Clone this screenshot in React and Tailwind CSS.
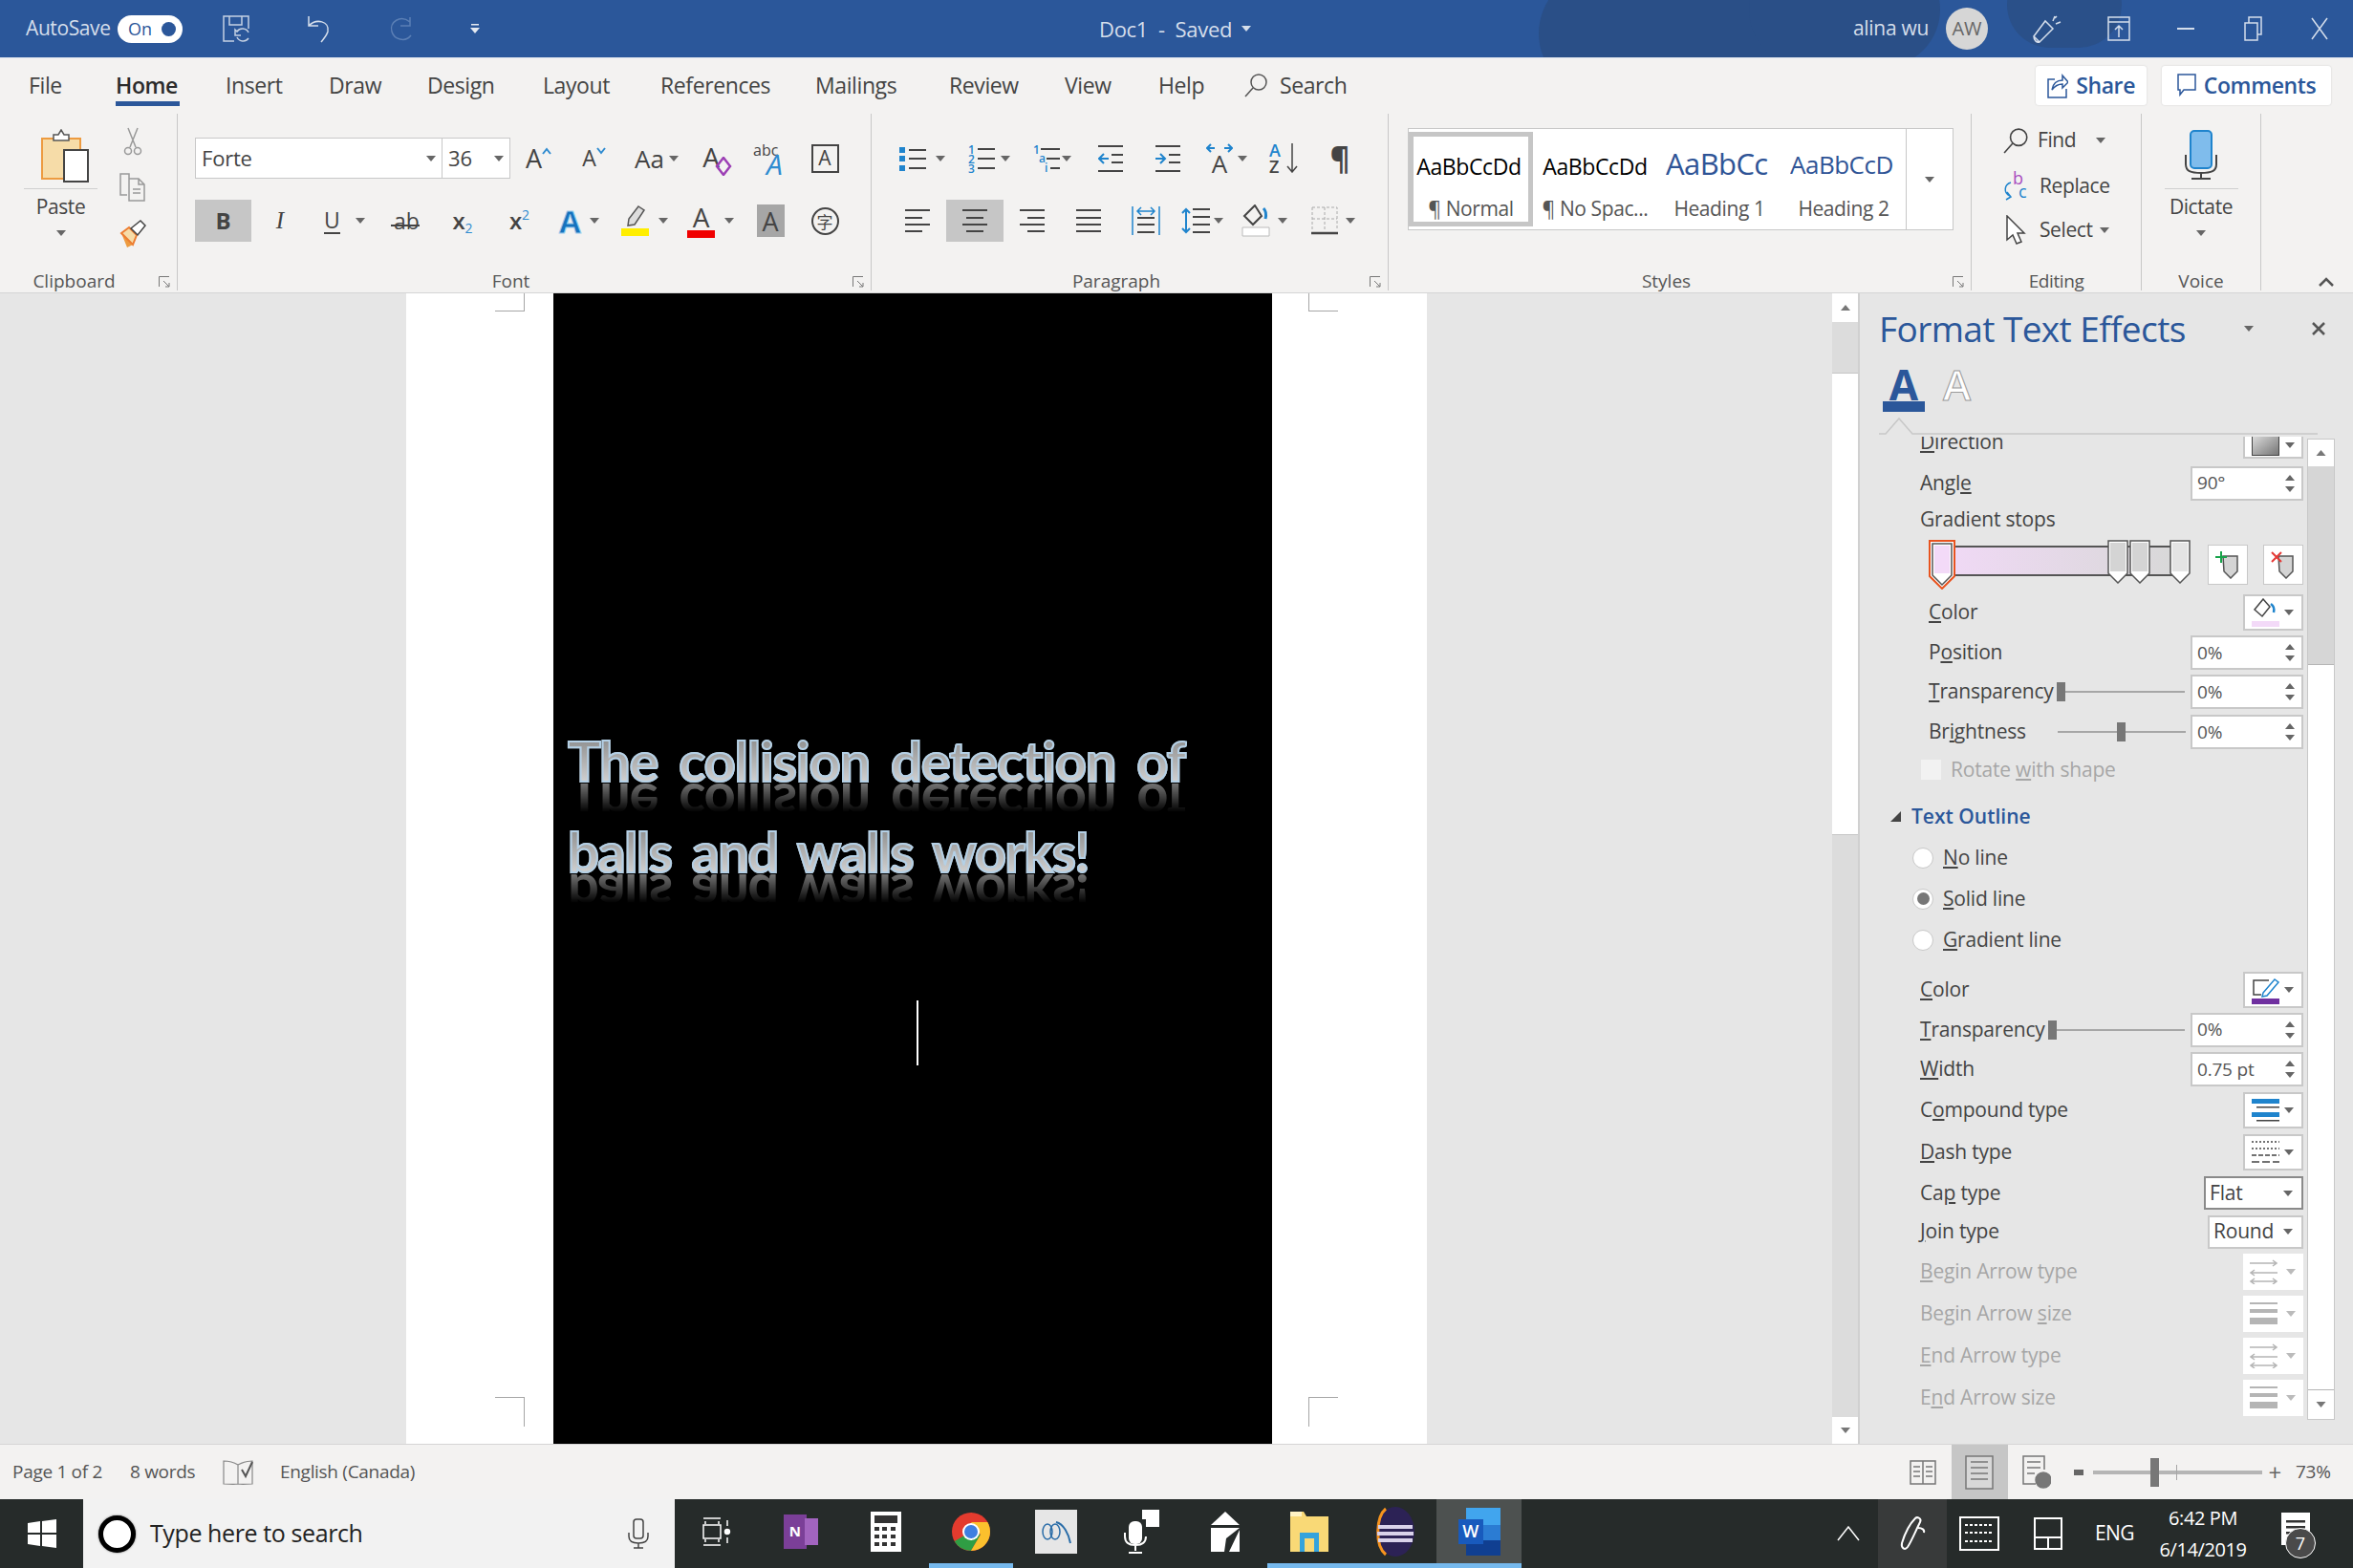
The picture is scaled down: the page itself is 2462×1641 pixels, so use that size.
import clsx from "clsx";

function Caret({ className, color = "#666" }) {
  return (
    <svg width="10" height="6" viewBox="0 0 10 6" className={clsx("shrink-0", className)}>
      <path d="M0 0h10L5 6z" fill={color} />
    </svg>
  );
}

function Bars({ lines, color = "#444", w = 32, h = 30 }) {
  return (
    <svg width={w} height={h} viewBox={`0 0 ${w} ${h}`}>
      {lines.map(([x1, x2, y], i) => (
        <path key={i} d={`M${x1} ${y}H${x2}`} stroke={color} strokeWidth="2" />
      ))}
    </svg>
  );
}

function GroupFooter({ label, launcher, className }) {
  return (
    <div className={clsx("relative mt-auto flex h-[20px] items-center justify-center text-[19px] leading-none text-[#555]", launcher ? "pr-[28px]" : "", className)}>
      {label}
      {launcher ? (
        <svg width="12" height="12" viewBox="0 0 12 12" className="absolute right-[7px] top-[5px]">
          <path d="M.5 11V.5H11M5 5l6 6M7 11h4V7" fill="none" stroke="#777" />
        </svg>
      ) : null}
    </div>
  );
}

function Cell({ className, children }) {
  return <div className={clsx("flex shrink-0 items-center justify-center", className)}>{children}</div>;
}

function LetterA({ size = 28, className, children }) {
  return <span className={clsx("relative leading-none", className)} style={{ fontSize: size }}>{children}</span>;
}

function TitleBar() {
  return (
    <div className="relative flex h-[61px] items-center overflow-hidden border-b border-[#dfe5ee] bg-[#2b579a] text-[#d5deeb]">
      <div className="absolute left-[1610px] top-[-30px] h-[130px] w-[330px] rounded-full bg-[#2a4f87]" />
      <div className="absolute left-[1830px] top-[-50px] h-[120px] w-[200px] rounded-full bg-[#2a4f87]" />
      <div className="absolute left-[2100px] top-[-40px] h-[90px] w-[120px] rounded-full bg-[#2a5089]" />
      <div className="relative ml-[27px] w-[96px] text-[21px] tracking-[-0.4px]">AutoSave</div>
      <div className="relative flex h-[29px] w-[68px] items-center justify-between rounded-full bg-white pl-[11px] pr-[7px] text-[18px] text-[#2b579a]">
        On
        <span className="h-[15px] w-[15px] rounded-full bg-[#2b579a]" />
      </div>
      <svg width="32" height="30" viewBox="0 0 32 30" className="relative ml-[40px]" fill="none" stroke="#c5d1e3" strokeWidth="1.5">
        <path d="M14 28H3V2h26v13M9 2v9h13V2M29 19a7 7 0 0 0-12-1l-2-2v6h6M17 24a7 7 0 0 0 12 1" />
      </svg>
      <svg width="30" height="30" viewBox="0 0 30 30" className="relative ml-[57px]" fill="none" stroke="#d5deeb" strokeWidth="1.5">
        <path d="M3 2v10h10M3 12c8-8 22-5 20 6-1 4-4 7-7 11" />
      </svg>
      <svg width="32" height="30" viewBox="0 0 32 30" className="relative ml-[55px]" fill="none" stroke="#5b7fb5" strokeWidth="1.5">
        <path d="M24 3v9H14M24 8C14 0 2 8 5 18c2 8 14 12 20 4" />
      </svg>
      <svg width="10" height="12" viewBox="0 0 10 12" className="relative ml-[55px]" fill="#e4e9f1">
        <path d="M1 1h8v1.5H1zM0 5h10l-5 6z" />
      </svg>
      <div className="relative ml-[648px] flex w-[180px] items-center text-[22px] tracking-[-0.3px]">
        Doc1 &nbsp;-&nbsp; Saved
        <Caret className="ml-[10px]" color="#d5deeb" />
      </div>
      <div className="relative ml-auto flex items-center">
        <div className="text-[21px] tracking-[-0.3px]">alina wu</div>
        <div className="ml-[18px] flex h-[44px] w-[44px] items-center justify-center rounded-full bg-[#d6d6d6] text-[20px] text-[#666]">AW</div>
        <svg width="32" height="32" viewBox="0 0 32 32" className="ml-[46px]" fill="none" stroke="#d5deeb" strokeWidth="1.5">
          <path d="M2 24 14 8l8 8L8 30zM8 30c-3 1-6-2-6-6M22 8l2-5M25 11l5-2M24 5l2-2" />
        </svg>
        <svg width="24" height="28" viewBox="0 0 24 28" className="ml-[47px]" fill="none" stroke="#d5deeb" strokeWidth="1.5">
          <path d="M1 2h22v24H1zM1 7h22M12 23V11M8 15l4-4 4 4" />
        </svg>
        <div className="ml-[49px] h-[2px] w-[18px] bg-[#d5deeb]" />
        <svg width="20" height="28" viewBox="0 0 20 28" className="ml-[52px]" fill="none" stroke="#d5deeb" strokeWidth="1.5">
          <path d="M1 8h13v18H1zM5 8V2h13v18h-4" />
        </svg>
        <svg width="20" height="26" viewBox="0 0 20 26" className="ml-[49px] mr-[25px]" fill="none" stroke="#d5deeb" strokeWidth="1.5">
          <path d="M2 2l16 22M18 2 2 24" />
        </svg>
      </div>
    </div>
  );
}

function TabRow() {
  return (
    <div className="flex h-[58px] items-center pb-[2px] pl-[30px] text-[23px] tracking-[-0.4px] text-[#444]">
      <div className="w-[91px]">File</div>
      <div className="relative w-[115px] font-semibold text-[#2b2b2b]">
        Home
        <span className="absolute left-0 top-[34px] h-[5px] w-[67px] bg-[#2b579a]" />
      </div>
      <div className="w-[108px]">Insert</div>
      <div className="w-[103px]">Draw</div>
      <div className="w-[121px]">Design</div>
      <div className="w-[123px]">Layout</div>
      <div className="w-[162px]">References</div>
      <div className="w-[140px]">Mailings</div>
      <div className="w-[121px]">Review</div>
      <div className="w-[98px]">View</div>
      <div className="w-[90px]">Help</div>
      <svg width="26" height="26" viewBox="0 0 26 26" fill="none" stroke="#555" strokeWidth="1.5">
        <circle cx="15" cy="10" r="8" />
        <path d="M9 16 1 25" />
      </svg>
      <div className="ml-[11px]">Search</div>
      <div className="ml-auto mr-[16px] flex h-[41px] items-center rounded-[3px] bg-white px-[12px] text-[23px] font-semibold text-[#2b579a] shadow-[0_0_2px_#ccc]">
        <svg width="22" height="28" viewBox="0 0 22 28" fill="none" stroke="#2b579a" strokeWidth="1.5" className="mr-[8px]">
          <path d="M8 8H1v19h19v-9M5 19c1-6 5-10 11-10V4l6 7-6 6v-4c-5 0-8 2-11 6z" />
        </svg>
        Share
      </div>
      <div className="mr-[23px] flex h-[41px] w-[177px] items-center justify-center rounded-[3px] bg-white text-[23px] font-semibold text-[#2b579a] shadow-[0_0_2px_#ccc]">
        <svg width="20" height="26" viewBox="0 0 20 26" fill="none" stroke="#2b579a" strokeWidth="1.5" className="mr-[8px]">
          <path d="M1 2h18v16H7l-4 5v-5H1z" />
        </svg>
        Comments
      </div>
    </div>
  );
}

function ClipboardGroup() {
  return (
    <div className="flex h-[185px] w-[186px] shrink-0 flex-col border-r border-[#c8c8c8]">
      <div className="flex">
        <div className="flex w-[127px] flex-col items-center pt-[16px]">
          <svg width="52" height="56" viewBox="0 0 52 56" fill="none" className="ml-[8px]">
            <path d="M2 10h40v42H2z" fill="#f6dca8" stroke="#ed9b40" strokeWidth="2" />
            <path d="M14 12V6h5l3-5 3 5h5v6z" fill="#fff" stroke="#555" strokeWidth="1.5" />
            <path d="M25 22h25v33H25z" fill="#fff" stroke="#444" strokeWidth="2" />
          </svg>
          <div className="mt-[6px] h-px w-[77px] bg-[#cfcfcf]" />
          <div className="mt-[5px] text-[21px] leading-[26px] tracking-[-0.4px] text-[#444]">Paste</div>
          <Caret className="mt-[12px]" />
        </div>
        <div className="flex w-[24px] flex-col items-center pt-[14px]">
          <svg width="20" height="30" viewBox="0 0 20 30" fill="none" stroke="#999" strokeWidth="1.5">
            <path d="M5 1l8 20M15 1 7 21" />
            <circle cx="5" cy="25" r="3.5" />
            <circle cx="15" cy="25" r="3.5" />
          </svg>
          <svg width="28" height="30" viewBox="0 0 28 30" fill="none" stroke="#999" strokeWidth="1.5" className="mt-[18px]">
            <path d="M10 6V1H1v22h7M10 6h10l6 6v17H10zM20 6v6h6M14 17h8M14 21h8" />
          </svg>
          <svg width="28" height="30" viewBox="0 0 28 30" className="mt-[19px]">
            <path d="M2 14l12 12-6 3z" fill="#ed9b40" />
            <path d="M2 14l8-6 8 8-4 10z" fill="#f6dca8" stroke="#ed7d31" strokeWidth="2" />
            <path d="M12 9l10-8 5 5-8 10z" fill="#fff" stroke="#444" strokeWidth="1.5" />
          </svg>
        </div>
      </div>
      <GroupFooter label="Clipboard" launcher className="!pr-[30px]" />
    </div>
  );
}

function FontGroup() {
  return (
    <div className="flex h-[185px] w-[726px] shrink-0 flex-col border-r border-[#c8c8c8]">
      <div className="flex items-center pl-[18px] pt-[25px]">
        <div className="flex h-[43px] w-[258px] items-center justify-between border-y border-l border-[#c8c8c8] bg-white pl-[6px] pr-[6px] text-[22px] tracking-[-0.2px] text-[#444]">
          Forte
          <Caret />
        </div>
        <div className="flex h-[43px] w-[72px] items-center justify-between border border-[#c8c8c8] bg-white pl-[6px] pr-[6px] text-[22px] text-[#444]">
          36
          <Caret />
        </div>
        <Cell className="w-[59px] text-[#444]">
          <LetterA size={27}>A</LetterA>
          <svg width="10" height="8" viewBox="0 0 10 8" className="-mt-[16px]" fill="none" stroke="#2e8bd0" strokeWidth="2"><path d="M1 7l4-5 4 5" /></svg>
        </Cell>
        <Cell className="w-[57px] text-[#444]">
          <LetterA size={23}>A</LetterA>
          <svg width="10" height="8" viewBox="0 0 10 8" className="-mt-[16px]" fill="none" stroke="#2e8bd0" strokeWidth="2"><path d="M1 1l4 5 4-5" /></svg>
        </Cell>
        <Cell className="w-[74px] text-[#444]">
          <LetterA size={26}>Aa</LetterA>
          <Caret className="ml-[5px]" />
        </Cell>
        <Cell className="w-[50px] text-[#444]">
          <div className="relative -ml-[10px]">
            <LetterA size={28}>A</LetterA>
            <svg width="18" height="20" viewBox="0 0 18 20" className="absolute left-[13px] top-[14px]" fill="none" stroke="#9c3fb5" strokeWidth="2.5"><path d="M9 1l7 9-7 9-7-9z" /></svg>
          </div>
        </Cell>
        <Cell className="w-[60px]">
          <div className="relative h-[34px] w-[32px] text-[#444]">
            <span className="absolute left-0 top-0 text-[16px] leading-none">abc</span>
            <span className="absolute left-[14px] top-[8px] text-[30px] italic leading-none text-[#2e8bd0]">A</span>
          </div>
        </Cell>
        <Cell className="w-[58px]">
          <div className="flex h-[30px] w-[29px] items-center justify-center border-2 border-[#444] text-[21px] leading-none text-[#444]">A</div>
        </Cell>
      </div>
      <div className="mt-[22px] flex items-center pl-[18px] text-[#444]">
        <Cell className="h-[44px] w-[59px] bg-[#c6c6c6] text-[24px] font-bold">B</Cell>
        <Cell className="h-[44px] w-[60px] text-[25px] italic [font-family:'Liberation_Serif',serif]">I</Cell>
        <Cell className="h-[44px] w-[75px]">
          <span className="ml-[-8px] border-b-2 border-[#444] text-[23px] leading-[26px]">U</span>
          <Caret className="ml-[16px] mr-[-8px]" />
        </Cell>
        <Cell className="h-[44px] w-[55px]">
          <span className="relative text-[23px] leading-none">ab<span className="absolute left-[-3px] top-[15px] h-[2px] w-[30px] bg-[#444]" /></span>
        </Cell>
        <Cell className="h-[44px] w-[62px] text-[24px] font-semibold">x<span className="mt-[14px] text-[14px] font-normal text-[#2e8bd0]">2</span></Cell>
        <Cell className="h-[44px] w-[57px] text-[24px] font-semibold">x<span className="-mt-[14px] text-[14px] font-normal text-[#2e8bd0]">2</span></Cell>
        <Cell className="h-[44px] w-[68px]">
          <span className="text-[33px] font-bold leading-none text-[#1672bd] [-webkit-text-stroke:1px_#9ccbec]">A</span>
          <Caret className="ml-[9px]" />
        </Cell>
        <Cell className="h-[44px] w-[68px]">
          <div className="flex w-[30px] flex-col items-center">
            <svg width="26" height="24" viewBox="0 0 26 24" fill="#ddd" stroke="#555" strokeWidth="1.5"><path d="M16 1l6 4-10 15-7 1 1-7z" /></svg>
            <div className="h-[8px] w-[29px] bg-[#ffee00]" />
          </div>
          <Caret className="ml-[9px]" />
        </Cell>
        <Cell className="h-[44px] w-[70px]">
          <div className="flex w-[30px] flex-col items-center">
            <span className="text-[28px] leading-[26px]">A</span>
            <div className="mt-[1px] h-[8px] w-[29px] bg-[#f00000]" />
          </div>
          <Caret className="ml-[9px]" />
        </Cell>
        <Cell className="h-[44px] w-[56px]">
          <div className="flex h-[34px] w-[29px] items-center justify-center bg-[#a6a6a6] text-[27px] leading-none">A</div>
        </Cell>
        <Cell className="h-[44px] w-[58px]">
          <div className="flex h-[29px] w-[29px] items-center justify-center rounded-full border-2 border-[#444] text-[17px] leading-none [font-family:'Noto_Sans_CJK_SC',sans-serif]">字</div>
        </Cell>
      </div>
      <GroupFooter label="Font" launcher />
    </div>
  );
}

function ListIcon({ marks, lines }) {
  return (
    <div className="relative h-[30px] w-[30px]">
      {marks.map((m, i) => (
        <span key={i} className={clsx("absolute text-[12px] font-semibold leading-none text-[#1f84cd]", m[1])}>{m[0]}</span>
      ))}
      <Bars lines={lines} />
    </div>
  );
}

function ParagraphGroup() {
  return (
    <div className="flex h-[185px] w-[541px] shrink-0 flex-col border-r border-[#c8c8c8] text-[#444]">
      <div className="flex items-center pl-[18px] pt-[32px]">
        <Cell className="h-[30px] w-[70px]">
          <svg width="30" height="28" viewBox="0 0 30 28">
            <path d="M0 2h6v6H0zM0 11h6v6H0zM0 21h6v6H0z" fill="#1f84cd" />
            <path d="M10 5h18M10 14h18M10 24h18" stroke="#444" strokeWidth="2" />
          </svg>
          <Caret className="ml-[8px]" />
        </Cell>
        <Cell className="h-[30px] w-[70px]">
          <ListIcon marks={[["1", "left-0 top-0"], ["2", "left-0 top-[10px]"], ["3", "left-0 top-[20px]"]]} lines={[[10, 28, 5], [10, 28, 15], [10, 28, 25]]} />
          <Caret className="ml-[4px]" />
        </Cell>
        <Cell className="h-[30px] w-[62px]">
          <ListIcon marks={[["1", "left-0 top-0"], ["a", "left-[6px] top-[9px]"], ["i", "left-[12px] top-[19px]"]]} lines={[[8, 28, 5], [14, 28, 15], [18, 28, 25]]} />
          <Caret />
        </Cell>
        <Cell className="h-[30px] w-[60px]">
          <svg width="26" height="30" viewBox="0 0 26 30" fill="none">
            <path d="M0 2h26M14 11h12M14 19h12M0 28h26" stroke="#444" strokeWidth="2" />
            <path d="M11 15H1M6 10l-5 5 5 5" stroke="#1f84cd" strokeWidth="2" />
          </svg>
        </Cell>
        <Cell className="h-[30px] w-[60px]">
          <svg width="26" height="30" viewBox="0 0 26 30" fill="none">
            <path d="M0 2h26M14 11h12M14 19h12M0 28h26" stroke="#444" strokeWidth="2" />
            <path d="M0 15h10M5 10l5 5-5 5" stroke="#1f84cd" strokeWidth="2" />
          </svg>
        </Cell>
        <Cell className="h-[30px] w-[62px]">
          <div className="relative flex h-[32px] w-[30px] items-end justify-center">
            <svg width="28" height="10" viewBox="0 0 28 10" className="absolute top-0" fill="none" stroke="#1f84cd" strokeWidth="2"><path d="M9 5H1M5 1 1 5l4 4M19 5h8M23 1l4 4-4 4" /></svg>
            <span className="text-[26px] leading-[22px]">A</span>
          </div>
          <Caret className="ml-[4px]" />
        </Cell>
        <Cell className="h-[30px] w-[58px]">
          <div className="relative flex h-[34px] w-[30px] flex-col text-[18px] font-semibold leading-[17px]">
            <span className="text-[#1f84cd]">A</span>
            <span>Z</span>
            <svg width="12" height="32" viewBox="0 0 12 32" className="absolute right-0 top-0" fill="none" stroke="#444" strokeWidth="1.5"><path d="M6 1v29M1 25l5 6 5-6" /></svg>
          </div>
        </Cell>
        <Cell className="h-[30px] w-[60px] text-[32px] font-bold leading-none">¶</Cell>
      </div>
      <div className="mt-[28px] flex items-center pl-[18px]">
        <Cell className="h-[44px] w-[60px]"><Bars w={26} h={26} lines={[[0, 26, 2], [0, 18, 10], [0, 26, 17], [0, 18, 24]]} /></Cell>
        <Cell className="h-[44px] w-[60px] bg-[#c6c6c6]"><Bars w={26} h={26} lines={[[0, 26, 2], [4, 22, 10], [0, 26, 17], [4, 22, 24]]} /></Cell>
        <Cell className="h-[44px] w-[59px]"><Bars w={26} h={26} lines={[[0, 26, 2], [8, 26, 10], [0, 26, 17], [8, 26, 24]]} /></Cell>
        <Cell className="h-[44px] w-[60px]"><Bars w={26} h={26} lines={[[0, 26, 2], [0, 26, 10], [0, 26, 17], [0, 26, 24]]} /></Cell>
        <Cell className="h-[44px] w-[59px]">
          <svg width="30" height="30" viewBox="0 0 30 30" fill="none">
            <path d="M6 12h18M6 19h18M6 27h18" stroke="#444" strokeWidth="2" />
            <path d="M1 0v30M29 0v30M6 5h18M10 1 6 5l4 4M20 1l4 4-4 4" stroke="#1f84cd" strokeWidth="1.5" />
          </svg>
        </Cell>
        <Cell className="h-[44px] w-[60px]">
          <svg width="30" height="28" viewBox="0 0 30 28" fill="none">
            <path d="M12 2h18M12 10h18M12 18h18M12 26h18" stroke="#444" strokeWidth="2" />
            <path d="M5 2v24M1 6l4-4 4 4M1 22l4 4 4-4" stroke="#1f84cd" strokeWidth="2" />
          </svg>
          <Caret className="ml-[4px]" />
        </Cell>
        <Cell className="h-[44px] w-[69px]">
          <svg width="30" height="34" viewBox="0 0 30 34" fill="none">
            <path d="M14 1 3 12l9 9 9-9z" stroke="#444" strokeWidth="2" />
            <path d="M23 4c3 3 3 7 2 11" stroke="#1f84cd" strokeWidth="3" />
            <path d="M1 24h28v9H1z" fill="#fff" stroke="#bbb" />
          </svg>
          <Caret className="ml-[8px]" />
        </Cell>
        <Cell className="ml-[3px] h-[44px] w-[69px]">
          <svg width="28" height="30" viewBox="0 0 28 30" fill="none">
            <path d="M1 1h26v23M1 1v23M14 1v23M1 13h26" stroke="#aaa" strokeDasharray="3 2" />
            <path d="M0 28h28" stroke="#444" strokeWidth="2.5" />
          </svg>
          <Caret className="ml-[8px]" />
        </Cell>
      </div>
      <GroupFooter label="Paragraph" launcher />
    </div>
  );
}

function StylesGroup() {
  const labelClass = "mt-[15px] text-[21px] leading-[26px] tracking-[-0.4px] text-[#555]";
  return (
    <div className="flex h-[185px] w-[610px] shrink-0 flex-col border-r border-[#c8c8c8]">
      <div className="ml-[20px] mt-[15px] flex h-[107px] w-[571px] border border-[#c8c8c8] bg-white">
        <div className="my-[3px] flex w-[130px] flex-col items-center border-[5px] border-[#c6c6c6] bg-white">
          <div className="ml-[-4px] mt-[15px] text-[23px] leading-[32px] tracking-[-0.4px] text-black">AaBbCcDd</div>
          <div className={labelClass}>¶ Normal</div>
        </div>
        <div className="flex w-[130px] flex-col items-center">
          <div className="mt-[23px] text-[23px] leading-[32px] tracking-[-0.4px] text-black">AaBbCcDd</div>
          <div className={labelClass}>¶ No Spac...</div>
        </div>
        <div className="flex w-[130px] flex-col items-center overflow-hidden">
          <div className="mt-[17px] w-[112px] overflow-hidden whitespace-nowrap text-[31px] leading-[38px] tracking-[-0.6px] text-[#2f5496]">AaBbCc</div>
          <div className="mt-[15px] text-[21px] leading-[26px] tracking-[-0.4px] text-[#555]">Heading 1</div>
        </div>
        <div className="flex w-[130px] flex-col items-center overflow-hidden">
          <div className="mt-[20px] w-[112px] overflow-hidden whitespace-nowrap text-[26px] leading-[35px] tracking-[-0.5px] text-[#2f5496]">AaBbCcD</div>
          <div className="mt-[15px] text-[21px] leading-[26px] tracking-[-0.4px] text-[#555]">Heading 2</div>
        </div>
        <div className="flex flex-1 items-center justify-center border-l border-[#c8c8c8]">
          <Caret />
        </div>
      </div>
      <GroupFooter label="Styles" launcher />
    </div>
  );
}

function EditingGroup() {
  return (
    <div className="flex h-[185px] w-[178px] shrink-0 flex-col border-r border-[#c8c8c8] text-[21px] tracking-[-0.4px] text-[#444]">
      <div className="ml-[33px] mt-[12px] flex h-[32px] items-center">
        <svg width="28" height="28" viewBox="0 0 26 26" fill="none" stroke="#444" strokeWidth="1.5"><circle cx="15" cy="10" r="8" /><path d="M9 16 1 25" /></svg>
        <span className="ml-[8px]">Find</span>
        <Caret className="ml-[21px]" />
      </div>
      <div className="ml-[33px] mt-[16px] flex h-[32px] items-center">
        <div className="relative h-[32px] w-[28px]">
          <span className="absolute left-[10px] top-[-2px] text-[18px] leading-none text-[#a94fc0]">b</span>
          <span className="absolute left-[16px] top-[12px] text-[18px] leading-none text-[#1f84cd]">c</span>
          <svg width="14" height="20" viewBox="0 0 14 20" className="absolute left-0 top-[11px]" fill="none" stroke="#1f84cd" strokeWidth="1.5"><path d="M8 1C1 3 0 12 7 15M4 11l4 5-5 3" /></svg>
        </div>
        <span className="ml-[10px]">Replace</span>
      </div>
      <div className="ml-[35px] mt-[14px] flex h-[32px] items-center">
        <svg width="22" height="32" viewBox="0 0 22 32" fill="#fff" stroke="#444" strokeWidth="1.5"><path d="M2 1v25l6-5 4 9 5-2-4-9h7z" /></svg>
        <span className="ml-[14px]">Select</span>
        <Caret className="ml-[7px]" />
      </div>
      <GroupFooter label="Editing" />
    </div>
  );
}

function VoiceGroup() {
  return (
    <div className="flex h-[185px] w-[125px] shrink-0 flex-col border-r border-[#c8c8c8]">
      <div className="flex flex-col items-center pt-[17px]">
        <svg width="36" height="52" viewBox="0 0 36 52" fill="none">
          <rect x="7" y="1" width="22" height="39" rx="4" fill="#7fbcec" stroke="#1f84cd" strokeWidth="2" />
          <path d="M2 26v10c0 7 5 9 16 9s16-2 16-9V26M18 45v6M8 51h20" stroke="#444" strokeWidth="2" />
        </svg>
        <div className="mt-[9px] h-px w-[77px] bg-[#cfcfcf]" />
        <div className="mt-[5px] text-[21px] leading-[26px] tracking-[-0.4px] text-[#444]">Dictate</div>
        <Caret className="mt-[12px]" />
      </div>
      <GroupFooter label="Voice" />
    </div>
  );
}

function Ribbon() {
  return (
    <div className="flex h-[188px] border-b border-[#d5d5d5] bg-[#f3f2f1]">
      <ClipboardGroup />
      <FontGroup />
      <ParagraphGroup />
      <StylesGroup />
      <EditingGroup />
      <VoiceGroup />
      <div className="flex flex-1 items-end justify-end pb-[6px] pr-[20px]">
        <svg width="16" height="10" viewBox="0 0 16 10" fill="none" stroke="#555" strokeWidth="2.5"><path d="M1 9l7-7 7 7" /></svg>
      </div>
    </div>
  );
}

function CropMark({ className }) {
  return <div className={clsx("absolute h-[31px] w-[31px] border-[#a6a6a6]", className)} />;
}

function ReflectLine({ className, children }) {
  return (
    <div className={clsx("relative h-[95px] whitespace-nowrap text-[58px] font-bold leading-[66px] [word-spacing:9px] [font-family:Lato,sans-serif]", className)}>
      <div aria-hidden="true" className="absolute left-0 top-[46px] -scale-y-100 text-[#777] [mask-image:linear-gradient(to_top,#000_15%,transparent_62%)]">
        {children}
      </div>
      <span className="relative bg-gradient-to-b from-[#7f7f7f] to-[#e2e2e2] bg-clip-text text-transparent [-webkit-text-stroke:2px_#b4d0e6]">
        {children}
      </span>
    </div>
  );
}

function Document() {
  return (
    <div className="flex w-[1917px] shrink-0 overflow-hidden bg-[#e6e6e6]">
      <div className="relative ml-[425px] h-full w-[1068px] bg-white">
        <CropMark className="left-[93px] top-[-12px] border-b border-r" />
        <CropMark className="left-[944px] top-[-12px] border-b border-l" />
        <CropMark className="bottom-[18px] left-[93px] border-r border-t" />
        <CropMark className="bottom-[18px] left-[944px] border-l border-t" />
        <div className="ml-[154px] h-full w-[752px] bg-black pl-[15px] pt-[456px]">
          <ReflectLine className="tracking-[-1.2px]">The collision detection of</ReflectLine>
          <ReflectLine className="tracking-[-1.7px]">balls and walls works!</ReflectLine>
          <div className="ml-[365px] mt-[94px] h-[68px] w-[2px] bg-white" />
        </div>
      </div>
    </div>
  );
}

function DocScrollbar() {
  return (
    <div className="flex w-[29px] shrink-0 flex-col border-r-2 border-[#d0d0d0] bg-[#dcdcdc]">
      <div className="flex h-[30px] items-center justify-center bg-white"><Caret className="rotate-180" color="#777" /></div>
      <div className="h-[53px]" />
      <div className="h-[484px] border-y border-[#c6c6c6] bg-white" />
      <div className="flex-1" />
      <div className="flex h-[28px] items-center justify-center bg-white"><Caret color="#777" /></div>
    </div>
  );
}

function Spin({ value }) {
  return (
    <div className="flex h-[36px] w-[118px] items-center justify-between border-2 border-[#c8c8c8] bg-white pl-[5px] pr-[7px] text-[19px] text-[#555]">
      {value}
      <div className="flex flex-col gap-[6px]">
        <Caret className="rotate-180" />
        <Caret />
      </div>
    </div>
  );
}

function DropBox({ disabled, children }) {
  return (
    <div className={clsx("flex h-[38px] w-[63px] items-center justify-between bg-white pl-[7px] pr-[7px]", disabled ? "" : "border-2 border-[#c8c8c8]")}>
      {children}
      <Caret color={disabled ? "#bbb" : "#666"} className="w-[12px]" />
    </div>
  );
}

function Slider({ thumb, className }) {
  return (
    <div className={clsx("relative h-[20px] w-[134px]", className)}>
      <div className="absolute left-0 right-0 top-[9px] h-[2px] bg-[#a6a6a6]" />
      <div className={clsx("absolute top-0 h-[20px] w-[9px] bg-[#777]", thumb)} />
    </div>
  );
}

function Radio({ checked }) {
  return (
    <div className="mr-[10px] flex h-[22px] w-[22px] items-center justify-center rounded-full border border-[#c8c8c8] bg-white">
      {checked ? <div className="h-[13px] w-[13px] rounded-full bg-[#777]" /> : null}
    </div>
  );
}

function ArrowIcon() {
  return (
    <svg width="29" height="26" viewBox="0 0 29 26" fill="none" stroke="#b5b5b5" strokeWidth="1.5">
      <path d="M0 4h28M24 1l4 3-4 3M29 14H1M5 11l-4 3 4 3M1 23h27M5 20l-4 3 4 3M24 20l4 3-4 3" />
    </svg>
  );
}

function SizeIcon() {
  return (
    <svg width="29" height="26" viewBox="0 0 29 26" fill="#b5b5b5">
      <path d="M0 1h29v2H0zM0 8h29v4H0zM0 17h29v7H0z" />
    </svg>
  );
}

function Stop({ fill, className }) {
  return (
    <svg width="22" height="46" viewBox="0 0 22 46" className={clsx("shrink-0", className)}>
      <path d="M1 1h20v34l-10 10L1 35z" fill="#fff" stroke="#555" strokeWidth="1.5" />
      <path d="M3 3h16v30H3z" fill={fill} />
    </svg>
  );
}

function FormatPanel() {
  return (
    <div className="flex h-full w-[516px] shrink-0 flex-col bg-[#e6e6e6] text-[#444]">
      <div className="flex h-[74px] shrink-0 items-center pl-[20px]">
        <div className="w-[381px] text-[37px] tracking-[-0.6px] text-[#2b579a]">Format Text Effects</div>
        <Caret className="w-[12px]" />
        <svg width="14" height="14" viewBox="0 0 14 14" className="ml-[60px]" fill="none" stroke="#555" strokeWidth="2.5"><path d="M1 1l12 12M13 1 1 13" /></svg>
      </div>
      <div className="flex h-[50px] shrink-0 items-start pl-[24px]">
        <div className="flex w-[44px] flex-col items-center">
          <div className="h-[39px] text-[44px] font-bold leading-[42px] text-[#2b579a]">A</div>
          <div className="h-[11px] w-[44px] bg-[#2b579a]" />
        </div>
        <div className="ml-[19px] h-[39px] text-[44px] font-semibold leading-[42px] text-white [-webkit-text-stroke:1px_#9a9a9a]">A</div>
      </div>
      <svg width="500" height="26" viewBox="0 0 500 26" className="shrink-0" fill="none" stroke="#c8c8c8" strokeWidth="1.5">
        <path d="M20 23h7L41 7l14 16h424" />
      </svg>
      <div className="flex min-h-0 flex-1">
        <div className="h-[1047px] w-[469px] shrink-0 overflow-hidden pr-[5px] text-[21px] tracking-[-0.2px]">
          <div className="-mt-[18px] flex h-[47px] justify-between pl-[63px]">
            <span className="mt-[8px]"><u>D</u>irection</span>
            <div className="flex h-[41px] w-[63px] items-center justify-between border-2 border-[#c8c8c8] bg-white pl-[7px] pr-[7px] pt-[12px]">
              <div className="h-[22px] w-[29px] border border-[#444] bg-gradient-to-br from-[#ddd] to-[#777]" />
              <Caret />
            </div>
          </div>
          <div className="flex h-[39px] items-center justify-between pl-[63px]">
            <span>Angl<u>e</u></span>
            <Spin value="90°" />
          </div>
          <div className="flex h-[38px] items-center pl-[63px]">Gradient stops</div>
          <div className="flex h-[55px] items-center justify-between pl-[72px]">
            <div className="relative flex h-[52px] w-[272px] items-start">
              <div className="absolute left-[20px] top-[6px] h-[32px] w-[240px] border-2 border-[#555] bg-gradient-to-r from-[#f0d9f5] to-[#d8d8d8]" />
              <svg width="28" height="52" viewBox="0 0 28 52" className="relative shrink-0">
                <path d="M1 1h26v37L14 51 1 38z" fill="#fff" stroke="#e8531f" strokeWidth="2" />
                <path d="M4 4h20v33l-10 10L4 37z" fill="#fff" stroke="#555" strokeWidth="1.5" />
                <path d="M6 6h16v29H6z" fill="#f3daf8" />
              </svg>
              <Stop fill="#d4d4d4" className="relative ml-[159px]" />
              <Stop fill="#d4d4d4" className="relative ml-[1px]" />
              <Stop fill="#e4e4e4" className="relative ml-[20px]" />
            </div>
            <div className="flex">
              <Cell className="h-[42px] w-[42px] border border-[#c8c8c8] bg-white">
                <svg width="26" height="30" viewBox="0 0 26 30" fill="none">
                  <path d="M8 6h15v16l-7 7-7-7z" fill="#d4d4d4" stroke="#555" strokeWidth="1.5" />
                  <path d="M6 1v12M0 7h12" stroke="#17a34a" strokeWidth="2" />
                </svg>
              </Cell>
              <Cell className="ml-[16px] h-[42px] w-[42px] border border-[#c8c8c8] bg-white">
                <svg width="26" height="30" viewBox="0 0 26 30" fill="none">
                  <path d="M8 6h15v16l-7 7-7-7z" fill="#d4d4d4" stroke="#555" strokeWidth="1.5" />
                  <path d="M1 2l10 10M11 2 1 12" stroke="#e53935" strokeWidth="2" />
                </svg>
              </Cell>
            </div>
          </div>
          <div className="flex h-[45px] items-center justify-between pl-[72px]">
            <span><u>C</u>olor</span>
            <DropBox>
              <svg width="29" height="30" viewBox="0 0 29 30" fill="none">
                <path d="M12 1 3 12l8 7 8-10z" stroke="#444" strokeWidth="1.5" />
                <path d="M20 6c3 2 4 5 3 9" stroke="#1f84cd" strokeWidth="2.5" />
                <path d="M0 24h29v6H0z" fill="#f3daf8" />
              </svg>
            </DropBox>
          </div>
          <div className="flex h-[40px] items-center justify-between pl-[72px]">
            <span>P<u>o</u>sition</span>
            <Spin value="0%" />
          </div>
          <div className="flex h-[42px] items-center pl-[72px]">
            <span className="w-[134px] shrink-0"><u>T</u>ransparency</span>
            <Slider thumb="left-0" />
            <div className="ml-auto"><Spin value="0%" /></div>
          </div>
          <div className="flex h-[42px] items-center pl-[72px]">
            <span className="w-[135px] shrink-0">Br<u>i</u>ghtness</span>
            <Slider thumb="left-[62px]" />
            <div className="ml-auto"><Spin value="0%" /></div>
          </div>
          <div className="flex h-[37px] items-center pl-[64px] text-[#a6a6a6]">
            <div className="mr-[10px] h-[21px] w-[21px] bg-[#f2f2f2]" />
            <span>Rotate <u>w</u>ith shape</span>
          </div>
          <div className="mt-[10px] flex h-[41px] items-center pl-[32px]">
            <svg width="11" height="11" viewBox="0 0 11 11" className="mr-[11px]"><path d="M11 0v11H0z" fill="#444" /></svg>
            <span className="font-semibold tracking-[0] text-[#2b579a]">Text Outline</span>
          </div>
          <div className="mt-[2px] flex h-[42px] items-center pl-[55px]"><Radio /><span><u>N</u>o line</span></div>
          <div className="flex h-[43px] items-center pl-[55px]"><Radio checked /><span><u>S</u>olid line</span></div>
          <div className="flex h-[43px] items-center pl-[55px]"><Radio /><span><u>G</u>radient line</span></div>
          <div className="mt-[10px] flex h-[42px] items-center justify-between pl-[63px]">
            <span><u>C</u>olor</span>
            <DropBox>
              <svg width="29" height="30" viewBox="0 0 29 30" fill="none">
                <path d="M10 20H2V5h16" stroke="#444" strokeWidth="1.5" />
                <path d="M12 18l12-14 4 3-12 14-5 1z" fill="#fff" stroke="#1f84cd" strokeWidth="1.5" />
                <path d="M0 24h29v6H0z" fill="#7030a0" />
              </svg>
            </DropBox>
          </div>
          <div className="flex h-[41px] items-center pl-[63px]">
            <span className="w-[134px] shrink-0"><u>T</u>ransparency</span>
            <Slider thumb="left-0" className="w-[143px]" />
            <div className="ml-auto"><Spin value="0%" /></div>
          </div>
          <div className="flex h-[42px] items-center justify-between pl-[63px]">
            <span><u>W</u>idth</span>
            <Spin value="0.75 pt" />
          </div>
          <div className="flex h-[43px] items-center justify-between pl-[63px]">
            <span>C<u>o</u>mpound type</span>
            <DropBox>
              <svg width="29" height="24" viewBox="0 0 29 24">
                <path d="M0 0h29v5H0zM0 14h29v5H0z" fill="#1f84cd" />
                <path d="M5 8h24v1.500H5zM5 22h24v1.500H5z" fill="#444" />
              </svg>
            </DropBox>
          </div>
          <div className="flex h-[45px] items-center justify-between pl-[63px]">
            <span><u>D</u>ash type</span>
            <DropBox>
              <svg width="29" height="24" viewBox="0 0 29 24" fill="none" stroke="#444" strokeWidth="1.5">
                <path d="M0 1h29M0 8h29" strokeDasharray="2 2" />
                <path d="M0 15h29" strokeDasharray="5 2" />
                <path d="M0 22h29" strokeDasharray="8 3" />
              </svg>
            </DropBox>
          </div>
          <div className="flex h-[41px] items-center justify-between pl-[63px]">
            <span>Ca<u>p</u> type</span>
            <div className="flex h-[35px] w-[104px] items-center justify-between border-2 border-[#8a8a8a] bg-white pl-[4px] pr-[8px]">Flat<Caret className="w-[12px]" /></div>
          </div>
          <div className="flex h-[40px] items-center justify-between pl-[63px]">
            <span><u>J</u>oin type</span>
            <div className="flex h-[35px] w-[100px] items-center justify-between border-2 border-[#c8c8c8] bg-white pl-[4px] pr-[8px]">Round<Caret className="w-[12px]" /></div>
          </div>
          <div className="flex h-[44px] items-center justify-between pl-[63px] text-[#a6a6a6]">
            <span><u>B</u>egin Arrow type</span>
            <DropBox disabled><ArrowIcon /></DropBox>
          </div>
          <div className="flex h-[44px] items-center justify-between pl-[63px] text-[#a6a6a6]">
            <span>Begin Arrow <u>s</u>ize</span>
            <DropBox disabled><SizeIcon /></DropBox>
          </div>
          <div className="flex h-[44px] items-center justify-between pl-[63px] text-[#a6a6a6]">
            <span><u>E</u>nd Arrow type</span>
            <DropBox disabled><ArrowIcon /></DropBox>
          </div>
          <div className="flex h-[44px] items-center justify-between pl-[63px] text-[#a6a6a6]">
            <span>E<u>n</u>d Arrow size</span>
            <DropBox disabled><SizeIcon /></DropBox>
          </div>
        </div>
        <div className="mt-[2px] flex h-[1027px] w-[29px] shrink-0 -translate-x-[1px] flex-col border border-[#c8c8c8] bg-[#d6d6d6]">
          <div className="flex h-[28px] items-center justify-center bg-white"><Caret className="w-[13px] rotate-180" color="#777" /></div>
          <div className="h-[207px]" />
          <div className="h-[760px] border-y border-[#b5b5b5] bg-white" />
          <div className="flex flex-1 items-center justify-center bg-white"><Caret className="w-[13px]" color="#777" /></div>
        </div>
      </div>
    </div>
  );
}

function StatusBar() {
  return (
    <div className="flex h-[58px] items-center border-t border-[#d5d5d5] bg-[#f3f2f1] pl-[13px] text-[19px] tracking-[-0.3px] text-[#555]">
      <span className="w-[123px]">Page 1 of 2</span>
      <span className="w-[97px]">8 words</span>
      <svg width="32" height="26" viewBox="0 0 32 26" fill="none" stroke="#888" strokeWidth="1.2">
        <path d="M1 1c6 0 10 1 15 4 5-3 9-4 15-4v24c-6 0-10 1-15 0-5 1-9 0-15 0zM16 5v20" />
        <path d="M20 10l4 7 7-15" stroke="#555" strokeWidth="2" />
      </svg>
      <span className="ml-[28px]">English (Canada)</span>
      <div className="ml-auto flex h-full items-center pr-[22px]">
        <svg width="28" height="28" viewBox="0 0 28 28" fill="none" stroke="#777" strokeWidth="1.5">
          <path d="M1 2h26v24H1zM14 2v24M4 8h7M4 13h7M4 18h7M17 8h7M17 13h7M17 18h7" />
        </svg>
        <Cell className="ml-[16px] h-full w-[59px] bg-[#c6c6c6]">
          <svg width="30" height="36" viewBox="0 0 30 36" fill="#d8d8d8" stroke="#777" strokeWidth="1.5">
            <path d="M1 1h28v34H1z" />
            <path d="M6 7h18M6 13h18M6 19h18M6 25h18" />
          </svg>
        </Cell>
        <svg width="30" height="36" viewBox="0 0 30 36" fill="none" stroke="#777" strokeWidth="1.5" className="ml-[15px]">
          <path d="M14 30H1V1h22v14M5 7h14M5 13h14M5 19h8" />
          <circle cx="22" cy="26" r="8" fill="#777" />
        </svg>
        <div className="ml-[24px] h-[6px] w-[10px] bg-[#666]" />
        <div className="relative ml-[10px] h-[30px] w-[177px]">
          <div className="absolute left-0 right-0 top-[13px] h-[4px] bg-[#b5b5b5]" />
          <div className="absolute left-[87px] top-[7px] h-[16px] w-px bg-[#a6a6a6]" />
          <div className="absolute left-[60px] top-0 h-[30px] w-[9px] bg-[#777]" />
        </div>
        <span className="ml-[7px] text-[24px] leading-none text-[#666]">+</span>
        <span className="ml-[15px] w-[38px]">73%</span>
      </div>
    </div>
  );
}

function TaskApp({ active, running, children }) {
  return (
    <div className={clsx("flex h-full w-[88.6px] shrink-0 items-center justify-center border-b-[5px]", running ? "border-[#76b9ed]" : "border-transparent", active ? "bg-[#4d5150]" : "")}>
      {children}
    </div>
  );
}

function Taskbar() {
  return (
    <div className="flex h-[72px] items-stretch bg-[#262b2a] text-white">
      <Cell className="w-[87px]">
        <svg width="30" height="30" viewBox="0 0 30 30" fill="#fff">
          <path d="M0 4l13-2v12H0zM15 2l15-2v14H15zM0 16h13v12L0 26zM15 16h15v14l-15-2z" />
        </svg>
      </Cell>
      <div className="flex w-[619px] items-center bg-[#f2f2f2] pl-[16px] text-[25px] tracking-[-0.4px] text-[#222]">
        <div className="h-[39px] w-[39px] rounded-full border-[5px] border-black bg-white shadow-[0_0_2px_#555]" />
        <span className="ml-[15px]">Type here to search</span>
        <svg width="22" height="32" viewBox="0 0 22 32" fill="none" stroke="#444" strokeWidth="1.5" className="ml-auto mr-[27px]">
          <rect x="6" y="1" width="10" height="20" rx="3" />
          <path d="M1 15v4c0 5 4 7 10 7s10-2 10-7v-4M11 26v5M6 31h10" />
        </svg>
      </div>
      <TaskApp>
        <svg width="30" height="30" viewBox="0 0 30 30" fill="none" stroke="#fff" strokeWidth="1.5">
          <path d="M1 1h18M1 29h18M1 8h18v14H1zM3 4v3M17 4v3M3 23v3M17 23v3M26 3v6M26 21v6" />
          <circle cx="26" cy="15" r="2.500" fill="#fff" />
        </svg>
      </TaskApp>
      <TaskApp>
        <div className="relative h-[36px] w-[38px]">
          <div className="absolute left-0 top-0 flex h-[36px] w-[24px] items-center justify-center bg-[#7b3f98] text-[15px] font-bold">N</div>
          <div className="absolute left-[22px] top-[4px] h-[28px] w-[14px] bg-[#a264bf]" />
        </div>
      </TaskApp>
      <TaskApp>
        <svg width="32" height="42" viewBox="0 0 32 42">
          <path d="M0 0h32v42H0z" fill="#fff" />
          <path d="M4 4h24v8H4zM4 16h5v4H4zM12 16h5v4h-5zM21 16h5v4h-5zM4 24h5v4H4zM12 24h5v4h-5zM21 24h5v4h-5zM4 32h5v4H4zM12 32h5v4h-5zM21 32h5v4h-5z" fill="#333" />
        </svg>
      </TaskApp>
      <TaskApp running>
        <svg width="40" height="40" viewBox="0 0 40 40">
          <circle cx="20" cy="20" r="20" fill="#e33b2e" />
          <path d="M20 20 2.700 30A20 20 0 0 0 20 40l10-17z" fill="#2f9e44" />
          <path d="M20 10h17.300A20 20 0 0 1 20 40l10-17z" fill="#fbc02d" />
          <circle cx="20" cy="20" r="9" fill="#fff" />
          <circle cx="20" cy="20" r="7" fill="#3f7fe0" />
        </svg>
      </TaskApp>
      <TaskApp>
        <div className="flex h-[46px] w-[44px] items-center justify-center bg-[#e6e6e6]">
          <svg width="34" height="30" viewBox="0 0 34 30" fill="none" stroke="#2b6da8" strokeWidth="1.5">
            <ellipse cx="8" cy="15" rx="5" ry="8" />
            <ellipse cx="16" cy="15" rx="5" ry="8" />
            <path d="M17 5c8 2 13 12 15 22" strokeWidth="2" />
          </svg>
        </div>
      </TaskApp>
      <TaskApp>
        <svg width="40" height="46" viewBox="0 0 40 46" fill="#fff">
          <path d="M22 0h18v18H26V10h-4z" />
          <rect x="8" y="12" width="14" height="24" rx="6" />
          <path d="M4 24v4c0 6 4 9 11 9s11-3 11-9M15 37v6M8 45h14" fill="none" stroke="#fff" strokeWidth="2" />
        </svg>
      </TaskApp>
      <TaskApp>
        <svg width="30" height="42" viewBox="0 0 30 42" fill="#fff">
          <path d="M15 0 30 14H0zM0 17h30L16 28l-2 14H0zM30 19v23H19z" />
        </svg>
      </TaskApp>
      <TaskApp running>
        <svg width="40" height="42" viewBox="0 0 40 42">
          <path d="M0 0h14l3 5h23v37H0z" fill="#f9d976" />
          <path d="M0 0h12v5H0z" fill="#fff3c4" />
          <path d="M10 22h20v20h-5V28H15v14h-5z" fill="#35a3dc" />
        </svg>
      </TaskApp>
      <TaskApp running>
        <svg width="42" height="52" viewBox="0 0 42 52">
          <ellipse cx="22" cy="26" rx="20" ry="26" fill="#2c2255" />
          <path d="M12 2C2 10 0 40 12 50" fill="none" stroke="#f7941e" strokeWidth="3" />
          <path d="M4 19h36v4H4zM3 26h38v4H3zM4 33h36v4H4z" fill="#d9d2ea" />
        </svg>
      </TaskApp>
      <TaskApp active running>
        <div className="relative h-[50px] w-[44px]">
          <div className="absolute right-0 top-0 h-[18px] w-[36px] bg-[#41a5ee]" />
          <div className="absolute right-0 top-[18px] h-[16px] w-[36px] bg-[#2b7cd3]" />
          <div className="absolute bottom-0 right-0 h-[16px] w-[36px] bg-[#103f91]" />
          <div className="absolute left-0 top-[12px] flex h-[26px] w-[26px] items-center justify-center bg-[#185abd] text-[18px] font-semibold">W</div>
        </div>
      </TaskApp>
      <div className="flex-1" />
      <Cell className="w-[62px]">
        <svg width="24" height="16" viewBox="0 0 24 16" fill="none" stroke="#fff" strokeWidth="1.5"><path d="M1 15 12 1l11 14" /></svg>
      </Cell>
      <Cell className="w-[72px] bg-[#383a3a]">
        <svg width="30" height="40" viewBox="0 0 30 40" fill="none" stroke="#fff" strokeWidth="2">
          <path d="M18 4C12 10 7 20 4 30c-1 5 3 8 6 4 4-6 8-16 13-26 2-4-3-6-5-4zM21 14c4 0 7 2 6 5" />
        </svg>
      </Cell>
      <Cell className="w-[68px]">
        <svg width="42" height="36" viewBox="0 0 42 36" fill="none" stroke="#fff" strokeWidth="2">
          <path d="M1 1h40v34H1z" />
          <path d="M6 9h30M6 17h30M6 26h30" strokeDasharray="3 2" />
        </svg>
      </Cell>
      <Cell className="w-[75px]">
        <svg width="30" height="34" viewBox="0 0 30 34" fill="none" stroke="#fff" strokeWidth="2">
          <path d="M1 1h28v32H1zM1 21h28M15 21v12" />
        </svg>
      </Cell>
      <Cell className="w-[65px] text-[21px] tracking-[-0.5px]">ENG</Cell>
      <div className="flex w-[120px] shrink-0 flex-col items-center justify-center gap-[7px] text-[20px] leading-[26px] tracking-[-0.4px]">
        <span>6:42 PM</span>
        <span>6/14/2019</span>
      </div>
      <div className="relative w-[97px] shrink-0">
        <svg width="30" height="38" viewBox="0 0 30 38" className="absolute left-[22px] top-[14px]" fill="#fff">
          <path d="M0 0h30v34H14l-4 4v-4H0z" />
          <path d="M5 8h20v2.500H5zM5 14h20v2.500H5zM5 20h14v2.500H5z" fill="#333" />
        </svg>
        <div className="absolute left-[26px] top-[30px] flex h-[32px] w-[32px] items-center justify-center rounded-full border border-white bg-[#4a4a4a] text-[18px]">7</div>
      </div>
    </div>
  );
}

export default function App() {
  return (
    <div className="flex h-[1641px] w-[2462px] flex-col overflow-hidden bg-[#f3f2f1] font-['Open_Sans',sans-serif]">
      <TitleBar />
      <TabRow />
      <Ribbon />
      <div className="flex min-h-0 flex-1">
        <Document />
        <DocScrollbar />
        <FormatPanel />
      </div>
      <StatusBar />
      <Taskbar />
    </div>
  );
}
